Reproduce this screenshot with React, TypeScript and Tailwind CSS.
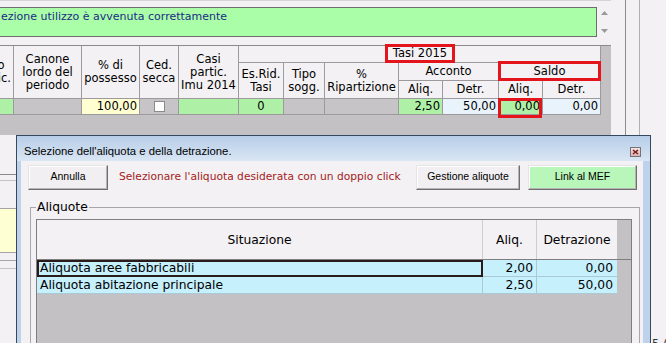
import React from 'react';

const dv = "font-['DejaVu_Sans',sans-serif]";
const lib = "font-['Liberation_Sans',Arial,sans-serif]";

// header cell of the top table
function HCell({ className = '', children }: { className?: string; children?: React.ReactNode }) {
  return (
    <div
      className={`flex items-center justify-center text-center border-r border-b border-[#9c9a9c] bg-[#f3f1f3] text-[11.5px] leading-[13px] ${className}`}
    >
      {children}
    </div>
  );
}

// data cell of the top table
function DCell({ className = '', children }: { className?: string; children?: React.ReactNode }) {
  return (
    <div className={`flex items-center border-r border-b border-[#9c9a9c] text-[11.5px] leading-[15px] ${className}`}>
      {children}
    </div>
  );
}

function WinButton({ className = '', children }: { className?: string; children: React.ReactNode }) {
  return (
    <button
      className={`h-[25px] flex items-center justify-center pb-[2px] border border-t-[#e4e4e4] border-l-[#e4e4e4] border-r-[#6f6f6f] border-b-[#6f6f6f] shadow-[inset_-1px_-1px_0_#b4b4b4,inset_1px_1px_0_#ffffff] text-[10.5px] text-black ${lib} ${className}`}
    >
      {children}
    </button>
  );
}

export default function App() {
  return (
    <div className={`relative w-[666px] h-[343px] overflow-hidden bg-[#f3f1f3] text-black ${dv}`}>
      {/* Background window */}
      <div className="flex h-full">
        <div className="w-[611px] shrink-0 flex flex-col border-t border-[#d6d4d6]">
          {/* Message box */}
          <div className="flex mt-[6px] h-[30px]">
            <div className="w-[598px] -ml-px border border-[#6e6e6e] bg-[#aafea8] pl-px pt-[2px] text-[11px] leading-[14px] text-[#1b2b86]">
              ezione utilizzo è avvenuta correttamente
            </div>
            <div className="flex-1 flex flex-col items-center justify-between py-[4px] pl-[1px]">
              <svg width="7" height="4" viewBox="0 0 7 4">
                <path d="M0 4 L3.5 0 L7 4 Z" fill="#9a9a9a" />
              </svg>
              <svg width="7" height="4" viewBox="0 0 7 4">
                <path d="M0 0 L3.5 4 L7 0 Z" fill="#9a9a9a" />
              </svg>
            </div>
          </div>

          {/* Grid with Tasi header */}
          <div className="mt-[8px] h-[90px] bg-[#c3c1c3] border-t border-[#8c8a8c] -ml-[28px] w-[639px]">
            <div className="grid grid-cols-[42px_68px_58px_39px_60px_45px_41px_74px_44px_56px_44px_58px_1fr] grid-rows-[17px_18px_18px_16px]">
              <HCell className="col-start-1 row-start-1 row-span-3">Tipo<br />partic.</HCell>
              <HCell className="col-start-2 row-start-1 row-span-3">Canone<br />lordo del<br />periodo</HCell>
              <HCell className="col-start-3 row-start-1 row-span-3">% di<br />possesso</HCell>
              <HCell className="col-start-4 row-start-1 row-span-3">Ced.<br />secca</HCell>
              <HCell className="col-start-5 row-start-1 row-span-3">Casi<br />partic.<br />Imu 2014</HCell>
              <HCell className="col-start-6 col-span-7 row-start-1 pl-[1px]">
                <span className="w-[70px] h-[19px] -mt-[1px] border-[3px] border-[#e4141c] flex items-center justify-center">
                  Tasi 2015
                </span>
              </HCell>
              <HCell className="col-start-6 row-start-2 row-span-2">Es.Rid.<br />Tasi</HCell>
              <HCell className="col-start-7 row-start-2 row-span-2">Tipo<br />sogg.</HCell>
              <HCell className="col-start-8 row-start-2 row-span-2">%<br />Ripartizione</HCell>
              <HCell className="col-start-9 col-span-2 row-start-2">Acconto</HCell>
              <HCell className="col-start-11 col-span-2 row-start-2 relative">
                Saldo
                <span className="absolute -left-px -top-[2px] -right-px -bottom-px border-[3px] border-[#e4141c]" />
              </HCell>
              <HCell className="col-start-9 row-start-3">Aliq.</HCell>
              <HCell className="col-start-10 row-start-3">Detr.</HCell>
              <HCell className="col-start-11 row-start-3">Aliq.</HCell>
              <HCell className="col-start-12 row-start-3">Detr.</HCell>

              <DCell className="col-start-1 row-start-4 bg-[#aef0a6]" />
              <DCell className="col-start-2 row-start-4 bg-[#c6c4c6]" />
              <DCell className="col-start-3 row-start-4 bg-[#ffffd2] justify-end pr-[2px]">100,00</DCell>
              <DCell className="col-start-4 row-start-4 bg-[#c6c4c6] justify-center">
                <span className="w-[11px] h-[11px] border border-[#8a8a8a] bg-white" />
              </DCell>
              <DCell className="col-start-5 row-start-4 bg-[#aef0a6]" />
              <DCell className="col-start-6 row-start-4 bg-[#aef0a6] justify-center">0</DCell>
              <DCell className="col-start-7 row-start-4 bg-[#c6c4c6]" />
              <DCell className="col-start-8 row-start-4 bg-[#c6c4c6]" />
              <DCell className="col-start-9 row-start-4 bg-[#aef0a6] justify-end pr-[2px]">2,50</DCell>
              <DCell className="col-start-10 row-start-4 bg-[#e8f3fc] justify-end pr-[2px]">50,00</DCell>
              <DCell className="col-start-11 row-start-4 bg-[#aef0a6] justify-end pr-[2px] relative">
                0,00
                <span className="absolute -left-px -top-px right-0 -bottom-[4px] border-[3px] border-[#e4141c]" />
              </DCell>
              <DCell className="col-start-12 row-start-4 bg-[#e8f3fc] justify-end pr-[2px]">0,00</DCell>
            </div>
          </div>

          {/* Panel under the grid (mostly covered) */}
          <div className="flex-1 flex flex-col">
            <div className="h-[39px]" />
            <div className="h-[6px] border-t border-[#8a8a8a]" />
            <div className="h-[28px] border-t border-[#c4c4c4]" />
            <div className="h-[45px] border-y border-[#a4a4a4] bg-[#ffffd4]" />
            <div className="h-[7px]" />
            <div className="h-[8px] border-t border-[#a4a4a4]" />
            <div className="border-t border-[#c4c4c4]" />
          </div>
        </div>

        {/* Right strip */}
        <div className="flex-1 flex min-w-0">
          <div className="w-[14px] shrink-0" />
          <div className="w-[14px] shrink-0 border-l border-[#8c8c8c]" />
          <div className="flex-1 min-w-0 border-l border-[#b0b0b0] flex flex-col justify-end pl-[12px]">
            <span className="whitespace-nowrap text-[11px] leading-[13px] -mb-[7px] text-[#333]">5 A</span>
          </div>
        </div>
      </div>

      {/* Dialog window */}
      <div className="absolute left-[16px] top-[135px] w-[635px] h-[216px] border border-[#36485d] bg-[#bed3eb] flex flex-col">
        <div className="h-[25px] shrink-0 flex items-center pt-[6px] pl-[7px] pr-[9px] bg-linear-to-b from-[#b7cde7] to-[#d9e6f4]">
          <span className={`flex-1 text-[11.3px] ${lib}`}>Selezione dell'aliquota e della detrazione.</span>
          <span className="w-[11px] h-[10px] border border-[#747474] bg-linear-to-b from-[#f4e4e4] to-[#d8b4b4] flex items-center justify-center">
            <svg width="7" height="6" viewBox="0 0 7 6">
              <path d="M1 1 L6 5 M6 1 L1 5" stroke="#7a1a1a" strokeWidth="1.6" />
            </svg>
          </span>
        </div>

        <div className="flex-1 flex pl-[4px] pr-[7px]">
          <div className="flex-1 bg-[#f3f1f3] flex flex-col">
            {/* Buttons */}
            <div className="mt-[4px] h-[25px] flex items-center pl-[7px] pr-[6px]">
              <WinButton className="w-[80px] bg-[#f1eff1]">Annulla</WinButton>
              <span className="ml-[11px] text-[10.7px] text-[#a41c1c]">
                Selezionare l'aliquota desiderata con un doppio click
              </span>
              <WinButton className="ml-auto w-[104px] bg-[#f1eff1]">Gestione aliquote</WinButton>
              <WinButton className="ml-[8px] w-[109px] bg-[#b9f6b9]">Link al MEF</WinButton>
            </div>

            {/* Aliquote group */}
            <fieldset className="mt-[10px] ml-[9px] mr-[3px] flex-1 border border-[#a8a6a8] min-w-0">
              <legend className="ml-[5px] px-[1px] text-[12.3px] leading-[15px]">Aliquote</legend>
              <div className="mt-[4px] ml-[5px] mr-[7px] h-[140px] border border-[#7e7e7e] bg-[#c3c1c3] flex flex-col text-[12.3px]">
                <div className="h-[40px] flex border-b border-[#7e7e7e]">
                  <div className="w-[446px] border-r border-[#cfcdcf] bg-[#f3f1f3] flex items-center justify-center pt-[2px]">
                    Situazione
                  </div>
                  <div className="w-[54px] border-r border-[#cfcdcf] bg-[#f3f1f3] flex items-center justify-center pt-[2px]">
                    Aliq.
                  </div>
                  <div className="w-[80px] bg-[#f3f1f3] flex items-center justify-center pt-[2px]">
                    Detrazione
                  </div>
                </div>
                <div className="h-[17px] flex leading-[13px]">
                  <div className="w-[446px] border-2 border-[#2a1b1b] bg-[#c6f0fc] pl-px flex items-center">
                    Aliquota aree fabbricabili
                  </div>
                  <div className="w-[54px] border-r border-b border-[#a9c9d6] bg-[#c6f0fc] flex items-center justify-end pr-[3px]">
                    2,00
                  </div>
                  <div className="w-[80px] border-b border-[#a9c9d6] bg-[#c6f0fc] flex items-center justify-end pr-[4px]">
                    0,00
                  </div>
                </div>
                <div className="h-[17px] flex leading-[13px]">
                  <div className="w-[446px] border-r border-b border-[#a9c9d6] bg-[#c6f0fc] pl-[3px] flex items-center">
                    Aliquota abitazione principale
                  </div>
                  <div className="w-[54px] border-r border-b border-[#a9c9d6] bg-[#c6f0fc] flex items-center justify-end pr-[3px]">
                    2,50
                  </div>
                  <div className="w-[80px] border-b border-[#a9c9d6] bg-[#c6f0fc] flex items-center justify-end pr-[4px]">
                    50,00
                  </div>
                </div>
              </div>
            </fieldset>
          </div>
        </div>
      </div>
    </div>
  );
}
